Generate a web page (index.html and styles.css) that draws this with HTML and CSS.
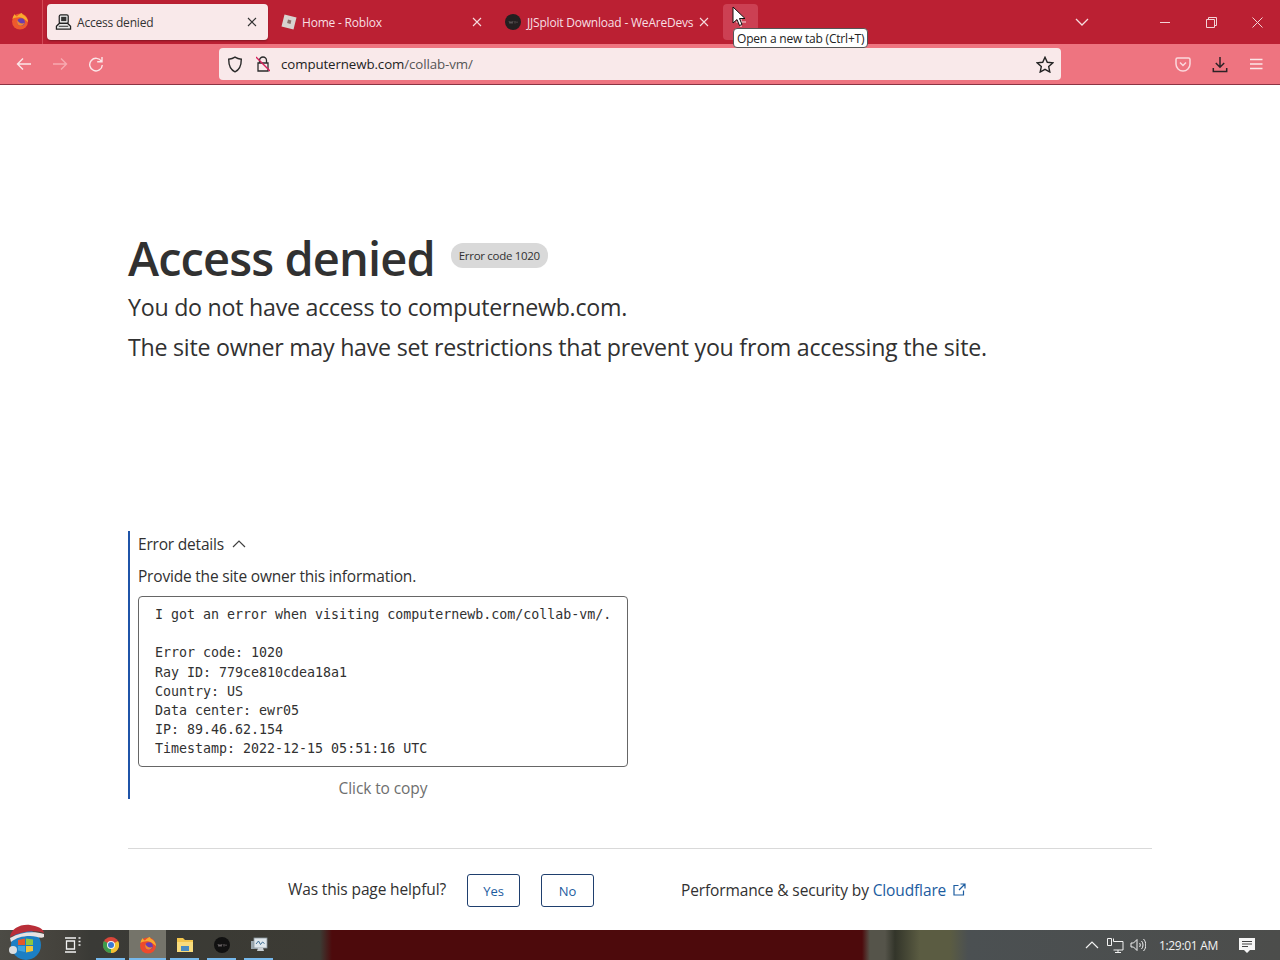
FILE: index.html
```html
<!DOCTYPE html>
<html lang="en">
<head>
    <meta charset="UTF-8">
    <title>Access denied</title>
    <link rel="stylesheet" href="styles.css">
</head>
<body>

    <div class="tabbar">
        <div class="tabbar__menu">
            <svg width="18" height="18" viewBox="0 0 18 18"><circle cx="9" cy="9.500" r="8" fill="#ee5a2c"/><path d="M1.500 7C2 4 3 3 4 2c0 1.500 1 2.500 2 2.500C7 3 9 1.500 11 1c0 1.500 1.500 2 3 3 2 2 3 4 3 6-3-2-4-4-7-4.500C6 5 3 6 1.500 7z" fill="#f9a92f"/><circle cx="10" cy="10" r="3.800" fill="#6a3db0"/><path d="M6.500 8c1 3 4 4 7 3-1 2-3 3-5 2.500-2-.5-3-3-2-5.500z" fill="#f28a2e"/></svg>
        </div>
        <div class="tab tab--active">
            <svg class="tab__icon" width="17" height="17" viewBox="0 0 18 18" fill="#e8e8e8" stroke="#222" stroke-width="1.300"><rect x="4.500" y="1" width="9.500" height="9" rx="1.500"/><rect x="6.500" y="3" width="5.500" height="4.500" fill="#333" stroke="none"/><path d="M1.500 13l3-3h9l3 3v3h-15z"/><path d="M4 13h10" stroke-width="1"/></svg>
            <span class="tab__title">Access denied</span>
            <svg class="tab__close" width="10" height="10" viewBox="0 0 10 10"><path d="M1 1l8 8M9 1l-8 8" stroke="#333" stroke-width="1.100"/></svg>
        </div>
        <div class="tab tab--roblox">
            <svg class="tab__icon" width="16" height="16" viewBox="0 0 16 16"><path d="M3.500.5L15.500 3.500l-3 12L.5 12.500z" fill="#d8d3d0"/><rect x="6.500" y="6" width="3.500" height="3.500" fill="#8a6f6a" transform="rotate(15 8.200 7.700)"/></svg>
            <span class="tab__title">Home - Roblox</span>
            <svg class="tab__close" width="10" height="10" viewBox="0 0 10 10"><path d="M1 1l8 8M9 1l-8 8" stroke="#f6dcdf" stroke-width="1.100"/></svg>
        </div>
        <div class="tab tab--devs">
            <svg class="tab__icon" width="16" height="16" viewBox="0 0 16 16"><circle cx="8" cy="8" r="8" fill="#241f20"/><path d="M4 7l1 2.500 1-2 1 2 1-2.500M10 7v2.500M12 7.500v1.500" stroke="#6d6466" stroke-width=".7" fill="none"/></svg>
            <span class="tab__title">JJSploit Download - WeAreDevs</span>
            <svg class="tab__close" width="10" height="10" viewBox="0 0 10 10"><path d="M1 1l8 8M9 1l-8 8" stroke="#f6dcdf" stroke-width="1.100"/></svg>
        </div>
        <div class="newtab">
            <svg width="12" height="12" viewBox="0 0 12 12"><path d="M6 1v10M1 6h10" stroke="#f6dcdf" stroke-width="1.200"/></svg>
        </div>
        <div class="tabbar__right">
            <svg class="tabbar__list" width="14" height="8" viewBox="0 0 14 8"><path d="M1 1l6 6 6-6" fill="none" stroke="#f6dcdf" stroke-width="1.300"/></svg>
            <div class="winbtn"><svg width="11" height="11" viewBox="0 0 11 11"><path d="M0 5.500h10" stroke="#f3d3d7" stroke-width="1"/></svg></div>
            <div class="winbtn"><svg width="11" height="11" viewBox="0 0 11 11" fill="none" stroke="#f3d3d7"><path d="M.5 2.500h8v8h-8zM2.500 2.500v-2h8v8h-2"/></svg></div>
            <div class="winbtn"><svg width="11" height="11" viewBox="0 0 11 11"><path d="M.5.500l10 10M10.500.500l-10 10" stroke="#f3d3d7"/></svg></div>
        </div>
    </div>

    <div class="toolbar">
        <div class="toolbar__nav">
            <svg width="16" height="14" viewBox="0 0 16 14" fill="none" stroke="#fbe6e8" stroke-width="1.400"><path d="M15 7H1.500M7 1.500L1.500 7 7 12.500"/></svg>
            <svg width="16" height="14" viewBox="0 0 16 14" fill="none" stroke="#f7a9b0" stroke-width="1.400"><path d="M1 7h13.500M9 1.500L14.500 7 9 12.500"/></svg>
            <svg width="16" height="16" viewBox="0 0 16 16" fill="none" stroke="#fbe6e8" stroke-width="1.400"><path d="M13.500 5.500A6.300 6.300 0 1 0 14.300 9M14 1v4.800H9.200"/></svg>
        </div>
        <div class="urlbar">
            <svg width="16" height="17" viewBox="0 0 16 17" fill="none" stroke="#2b2b2b" stroke-width="1.400"><path d="M8 1.200c2 1.300 4 1.800 6.300 2 0 6-1.500 10.500-6.300 12.600C3.200 13.700 1.700 9.200 1.700 3.200c2.300-.2 4.300-.7 6.300-2z"/></svg>
            <svg class="urlbar__lock" width="14" height="16" viewBox="0 0 14 16" fill="none" stroke="#2b2b2b" stroke-width="1.300"><path d="M3.500 7V4.500a3.500 3.500 0 0 1 7 0V7M2 7h10v8H2z"/><path d="M0 1l14 14" stroke="#d61f5a"/></svg>
            <span class="urlbar__text">computernewb.com<span class="urlbar__path">/collab-vm/</span></span>
            <svg class="urlbar__star" width="18" height="17" viewBox="0 0 18 17" fill="none" stroke="#222" stroke-width="1.400"><path d="M9 1.300l2.300 5 5.400.6-4 3.700 1.100 5.400L9 13.300 4.200 16l1.100-5.400-4-3.700 5.400-.6z"/></svg>
        </div>
        <div class="toolbar__right">
            <svg width="16" height="15" viewBox="0 0 16 15" fill="none" stroke="#fbd9dd" stroke-width="1.500"><path d="M1 2.500c0-.8.600-1.500 1.500-1.500h11c.9 0 1.500.7 1.500 1.500V7c0 3.800-3.200 7-7 7s-7-3.200-7-7z"/><path d="M5 5.500l3 3 3-3"/></svg>
            <svg width="16" height="17" viewBox="0 0 16 17" fill="none" stroke="#2c2226" stroke-width="1.500"><path d="M8 1v10M3.800 7L8 11.200 12.200 7M1.300 12v3.500h13.400V12"/></svg>
            <svg width="14" height="12" viewBox="0 0 14 12" stroke="#fbe6e8" stroke-width="1.300"><path d="M1 1.500h12.500M1 6h12.500M1 10.500h12.500"/></svg>
        </div>
    </div>

    <main class="page">
        <div class="headline">
            <h1>Access denied</h1>
            <span class="badge">Error code 1020</span>
        </div>
        <p class="lead">You do not have access to computernewb.com.</p>
        <p class="lead">The site owner may have set restrictions that prevent you from accessing the site.</p>

        <section class="details">
            <div class="details__toggle">
                <span>Error details</span>
                <svg width="14" height="8" viewBox="0 0 14 8"><path d="M1 7l6-6 6 6" fill="none" stroke="#404040" stroke-width="1.200"/></svg>
            </div>
            <p class="details__hint">Provide the site owner this information.</p>
            <div class="details__copy">
                <pre class="details__box">I got an error when visiting computernewb.com/collab-vm/.

Error code: 1020
Ray ID: 779ce810cdea18a1
Country: US
Data center: ewr05
IP: 89.46.62.154
Timestamp: 2022-12-15 05:51:16 UTC</pre>
                <div class="details__click">Click to copy</div>
            </div>
        </section>

        <footer class="footer">
            <div class="feedback">
                <span class="feedback__label">Was this page helpful?</span>
                <button class="feedback__btn">Yes</button>
                <button class="feedback__btn">No</button>
            </div>
            <div class="credit">
                <span>Performance &amp; security by <a href="#">Cloudflare</a></span>
                <svg width="13" height="13" viewBox="0 0 13 13" fill="none" stroke="#1c5ca0" stroke-width="1.200"><path d="M5.500 2.500H1v9.500h9.500V7.500M7.500 1H12v4.500M12 1L6 7"/></svg>
            </div>
        </footer>
    </main>

    <div class="taskbar">
        <div class="taskbar__start">
            <svg width="40" height="36" viewBox="0 0 40 36"><circle cx="18" cy="21" r="15" fill="#1c7fc4"/><path d="M10 16l7-1.500V21h-7z" fill="#e2582c"/><path d="M18 14.500l7 1V21h-7z" fill="#8fc641"/><path d="M10 22h7v6l-7-1.500z" fill="#3ea3e0"/><path d="M18 22h7v5l-7 1.500z" fill="#f4c53a"/><path d="M2 13C3 5 12 0 22 1c7 1 13 3 14 8-8-3-22-2-34 4z" fill="#b92e38"/><path d="M2 14c10-6 24-7 34-4v3c-3 2-8-1-14-1-8 0-14 2-19 6z" fill="#e8e2e2"/><circle cx="5" cy="26" r="4" fill="#d9dde0"/></svg>
        </div>
        <div class="taskbar__item taskbar__item--first">
            <svg width="16" height="16" viewBox="0 0 16 16" fill="none" stroke="#f2f2f2" stroke-width="1.300"><path d="M0 1h11M0 15h11M1.500 4h8v8h-8zM13.500 1h2M13.500 4.500h2M13.500 8h2"/></svg>
        </div>
        <div class="taskbar__item taskbar__item--open">
            <svg width="16" height="16" viewBox="0 0 16 16"><circle cx="8" cy="8" r="8" fill="#d9463a"/><path d="M8 8l7-4a8 8 0 0 1-7 12z" fill="#f2c230"/><path d="M8 8v8a8 8 0 0 1-7-12z" fill="#3d9b4c"/><circle cx="8" cy="8" r="4" fill="#f4f4f4"/><circle cx="8" cy="8" r="3" fill="#3b78d4"/></svg>
        </div>
        <div class="taskbar__item taskbar__item--open taskbar__item--active">
            <svg width="18" height="18" viewBox="0 0 18 18"><circle cx="9" cy="9.500" r="8" fill="#ee4a2c"/><path d="M1.500 7C2 4 3 3 4 2c0 1.500 1 2.500 2 2.500C7 3 9 1.500 11 1c0 1.500 1.500 2 3 3 2 2 3 4 3 6-3-2-4-4-7-4.500C6 5 3 6 1.500 7z" fill="#f9a92f"/><circle cx="10" cy="10" r="3.800" fill="#6a3db0"/><path d="M6.500 8c1 3 4 4 7 3-1 2-3 3-5 2.500-2-.5-3-3-2-5.500z" fill="#f28a2e"/></svg>
        </div>
        <div class="taskbar__item taskbar__item--open">
            <svg width="18" height="16" viewBox="0 0 18 16"><path d="M1 1h6l2 2h8v12H1z" fill="#f3c64e"/><rect x="1" y="5" width="16" height="10" fill="#f9dc7c"/><rect x="5" y="9" width="8" height="5" fill="#4a8cc2"/></svg>
        </div>
        <div class="taskbar__item taskbar__item--open">
            <svg width="16" height="16" viewBox="0 0 16 16"><circle cx="8" cy="8" r="8" fill="#111"/><path d="M4 7l1 2.500 1-2 1 2 1-2.500M10 7v2.500M12 7.500v1.500" stroke="#8d8486" stroke-width=".7" fill="none"/></svg>
        </div>
        <div class="taskbar__item taskbar__item--open">
            <svg width="18" height="16" viewBox="0 0 18 16"><rect x="1" y="4" width="8" height="8" fill="#9aa6ad"/><rect x="4" y="1" width="13" height="10" fill="#dfe7ec" stroke="#8a979e" stroke-width=".8"/><path d="M6 7l2.500-3 2 3.500 2-2.500 2 1.500" stroke="#3d6d92" fill="none"/><path d="M8 11h5l1 3H7z" fill="#c8ced2"/></svg>
        </div>
        <div class="taskbar__tray">
            <svg width="14" height="8" viewBox="0 0 14 8"><path d="M1 7l6-6 6 6" fill="none" stroke="#f2f2f2" stroke-width="1.200"/></svg>
            <svg class="taskbar__net" width="17" height="15" viewBox="0 0 17 15" fill="none" stroke="#f2f2f2"><path d="M6.500 3.500H16v8.500H6.500M11 12v2.500M8 14.500h6M.5.500h4v7h-4zM6.500 .5v3"/></svg>
            <svg width="16" height="14" viewBox="0 0 16 14" fill="none" stroke="#f2f2f2"><path d="M1 5h2.500L7 1.500v11L3.500 9H1zM9.500 5c1 1 1 3 0 4M11.500 3c2 2 2 6 0 8M13.500 1c3 3 3 9 0 12"/></svg>
            <span class="taskbar__clock">1:29:01 AM</span>
            <svg width="18" height="17" viewBox="0 0 18 17"><path d="M1 1h16v12h-5l-3 3-3-3H1z" fill="#f6f6f6"/><path d="M4 4.500h10M4 7h10M4 9.500h6" stroke="#444"/></svg>
        </div>
    </div>

    <!-- hover state over the new tab button -->
    <div class="tooltip">Open a new tab (Ctrl+T)</div>
    <svg class="cursor" width="14" height="21" viewBox="0 0 14 21"><path d="M1 1v16l4-3.500 2.500 6 2.500-1-2.500-6H13z" fill="#fff" stroke="#111"/></svg>

</body>
</html>
```

FILE: styles.css
```css
* {
    box-sizing: border-box;
}

body {
    margin: 0;
    height: 960px;
    overflow: hidden;
    display: flex;
    flex-direction: column;
    position: relative;
    font-family: 'Open Sans', sans-serif;
    background: #fff;
    color: #313131;
}

svg {
    display: block;
    flex-shrink: 0;
}

/* browser tabs */
.tabbar {
    height: 44px;
    background: #bb2033;
    display: flex;
    align-items: flex-start;
    font-size: 12px;
    letter-spacing: -0.2px;
}

.tabbar__menu {
    width: 43px;
    height: 44px;
    display: flex;
    align-items: center;
    justify-content: center;
    padding: 0 3px 3px 0;
    border-right: 1px solid #d34a58;
}

.tab {
    height: 36px;
    margin-top: 4px;
    padding: 0 14px 0 9px;
    display: flex;
    align-items: center;
    gap: 6px;
    color: #f8dfe2;
    border-radius: 4px;
}

.tab--active {
    width: 221px;
    margin: 4px 4px 0 4px;
    padding: 0 11px 0 8px;
    gap: 5px;
    background: #f9e9ea;
    color: #333;
    box-shadow: 0 1px 2px rgba(0, 0, 0, 0.3);
}

.tab--roblox {
    width: 224px;
    gap: 5px;
}

.tab--devs {
    width: 227px;
    padding-right: 16px;
}

.tab__title {
    flex: 1;
    white-space: nowrap;
}

.newtab {
    width: 35px;
    height: 36px;
    margin-top: 4px;
    background: #cc4053;
    border-radius: 4px;
    display: flex;
    align-items: center;
    justify-content: center;
}

.tabbar__right {
    margin-left: auto;
    height: 44px;
    display: flex;
    align-items: center;
}

.tabbar__list {
    margin-right: 53px;
}

.winbtn {
    width: 46px;
    display: flex;
    justify-content: center;
}

/* address bar row */
.toolbar {
    height: 41px;
    background: #ee7480;
    border-bottom: 1px solid #8c3443;
    display: flex;
    align-items: center;
    padding: 0 17px 0 16px;
}

.toolbar__nav {
    width: 203px;
    display: flex;
    align-items: center;
    gap: 20px;
}

.urlbar {
    width: 842px;
    height: 32px;
    background: #f9e9ea;
    border-radius: 4px;
    display: flex;
    align-items: center;
    padding: 0 7px 0 8px;
    font-size: 13.3px;
    letter-spacing: -0.1px;
    color: #222;
}

.urlbar__lock {
    margin-left: 13px;
    margin-right: 11px;
}

.urlbar__path {
    color: #555;
}

.urlbar__star {
    margin-left: auto;
}

.toolbar__right {
    margin-left: auto;
    display: flex;
    align-items: center;
    gap: 21px;
}

/* the error page */
.page {
    flex: 1;
    padding: 148px 128px 0;
}

.headline {
    display: flex;
    align-items: center;
    gap: 16px;
    height: 50px;
}

h1 {
    margin: 0;
    font-size: 47px;
    font-weight: 600;
    line-height: 48px;
    letter-spacing: -0.9px;
}

.badge {
    background: #d9d9d9;
    border-radius: 12px;
    padding: 0 8px;
    height: 25px;
    line-height: 25px;
    font-size: 11.5px;
    letter-spacing: -0.3px;
    margin-top: -5px;
}

.lead {
    margin: 0;
    font-size: 23.2px;
    line-height: 40px;
    letter-spacing: -0.25px;
}

.headline + .lead {
    margin-top: 4px;
}

.details {
    margin-top: 164px;
    height: 268px;
    padding: 1px 0 0 8px;
    border-left: 2px solid #1f54a8;
    font-size: 15.5px;
    letter-spacing: -0.2px;
}

.details__toggle {
    display: flex;
    align-items: center;
    gap: 8px;
    height: 24px;
}

.details__hint {
    margin: 8px 0;
    line-height: 24px;
}

.details__copy {
    width: 490px;
}

.details__box {
    margin: 0;
    height: 171px;
    padding: 8px 16px;
    border: 1px solid #666;
    border-radius: 4px;
    font-family: 'DejaVu Sans Mono', monospace;
    font-size: 13.3px;
    line-height: 19.2px;
    letter-spacing: 0;
}

.details__click {
    margin-top: 9px;
    line-height: 24px;
    text-align: center;
    color: #6e6e6e;
    letter-spacing: -0.1px;
}

.footer {
    margin-top: 49px;
    padding: 25px 0 0 160px;
    border-top: 1px solid #d9d9d9;
    display: flex;
    align-items: flex-start;
    font-size: 15.5px;
    letter-spacing: -0.13px;
}

.feedback {
    display: flex;
    align-items: center;
}

.feedback__label {
    padding-bottom: 4px;
}

.feedback__btn {
    width: 53px;
    height: 33px;
    margin-left: 21px;
    padding: 0;
    background: #fff;
    border: 1px solid #1f3f6e;
    border-radius: 3px;
    color: #1c5ca0;
    font-family: inherit;
    font-size: 13px;
}

.credit {
    height: 33px;
    margin-left: 87px;
    padding-bottom: 2px;
    display: flex;
    align-items: center;
    gap: 7px;
}

.credit a {
    color: #1c5ca0;
    text-decoration: none;
}

/* windows taskbar */
.taskbar {
    height: 30px;
    display: flex;
    align-items: center;
    position: relative;
    color: #f2f2f2;
    background: linear-gradient(to right, #4c4b45 0, #44423c 62px, #3a3a36 90px, #3c3b34 320px, #4d0a0c 332px, #4d0a0c 862px, #55544a 870px, #55544a 885px, #33352a 895px, #5b5c42 920px, #5b5c42 950px, #4b5052 968px, #4c4d4b 1280px);
}

.taskbar__start {
    width: 53px;
    height: 30px;
    position: relative;
}

.taskbar__start svg {
    position: absolute;
    left: 8px;
    top: -6px;
}

.taskbar__item {
    width: 37px;
    height: 30px;
    display: flex;
    align-items: center;
    justify-content: center;
    position: relative;
}

.taskbar__item--first {
    width: 39px;
}

.taskbar__item--open::after {
    content: "";
    position: absolute;
    left: 4px;
    right: 4px;
    bottom: 0;
    height: 2px;
    background: #76b9ed;
}

.taskbar__item--active {
    background: #75746a;
}

.taskbar__item--active::after {
    left: 0;
    right: 0;
}

.taskbar__tray {
    margin-left: auto;
    display: flex;
    align-items: center;
    padding-right: 24px;
    gap: 8px;
    font-size: 12px;
    letter-spacing: -0.3px;
}

.taskbar__net {
    margin-right: -2px;
}

.taskbar__clock {
    margin-left: 5px;
    margin-right: 12px;
}

/* overlays */
.tooltip {
    position: absolute;
    left: 733px;
    top: 28px;
    height: 20px;
    padding: 0 3px;
    background: #fff;
    border: 1px solid #555;
    border-radius: 4px;
    font-size: 12px;
    line-height: 19px;
    letter-spacing: -0.2px;
    color: #222;
    white-space: nowrap;
}

.cursor {
    position: absolute;
    left: 732px;
    top: 6px;
}
```
